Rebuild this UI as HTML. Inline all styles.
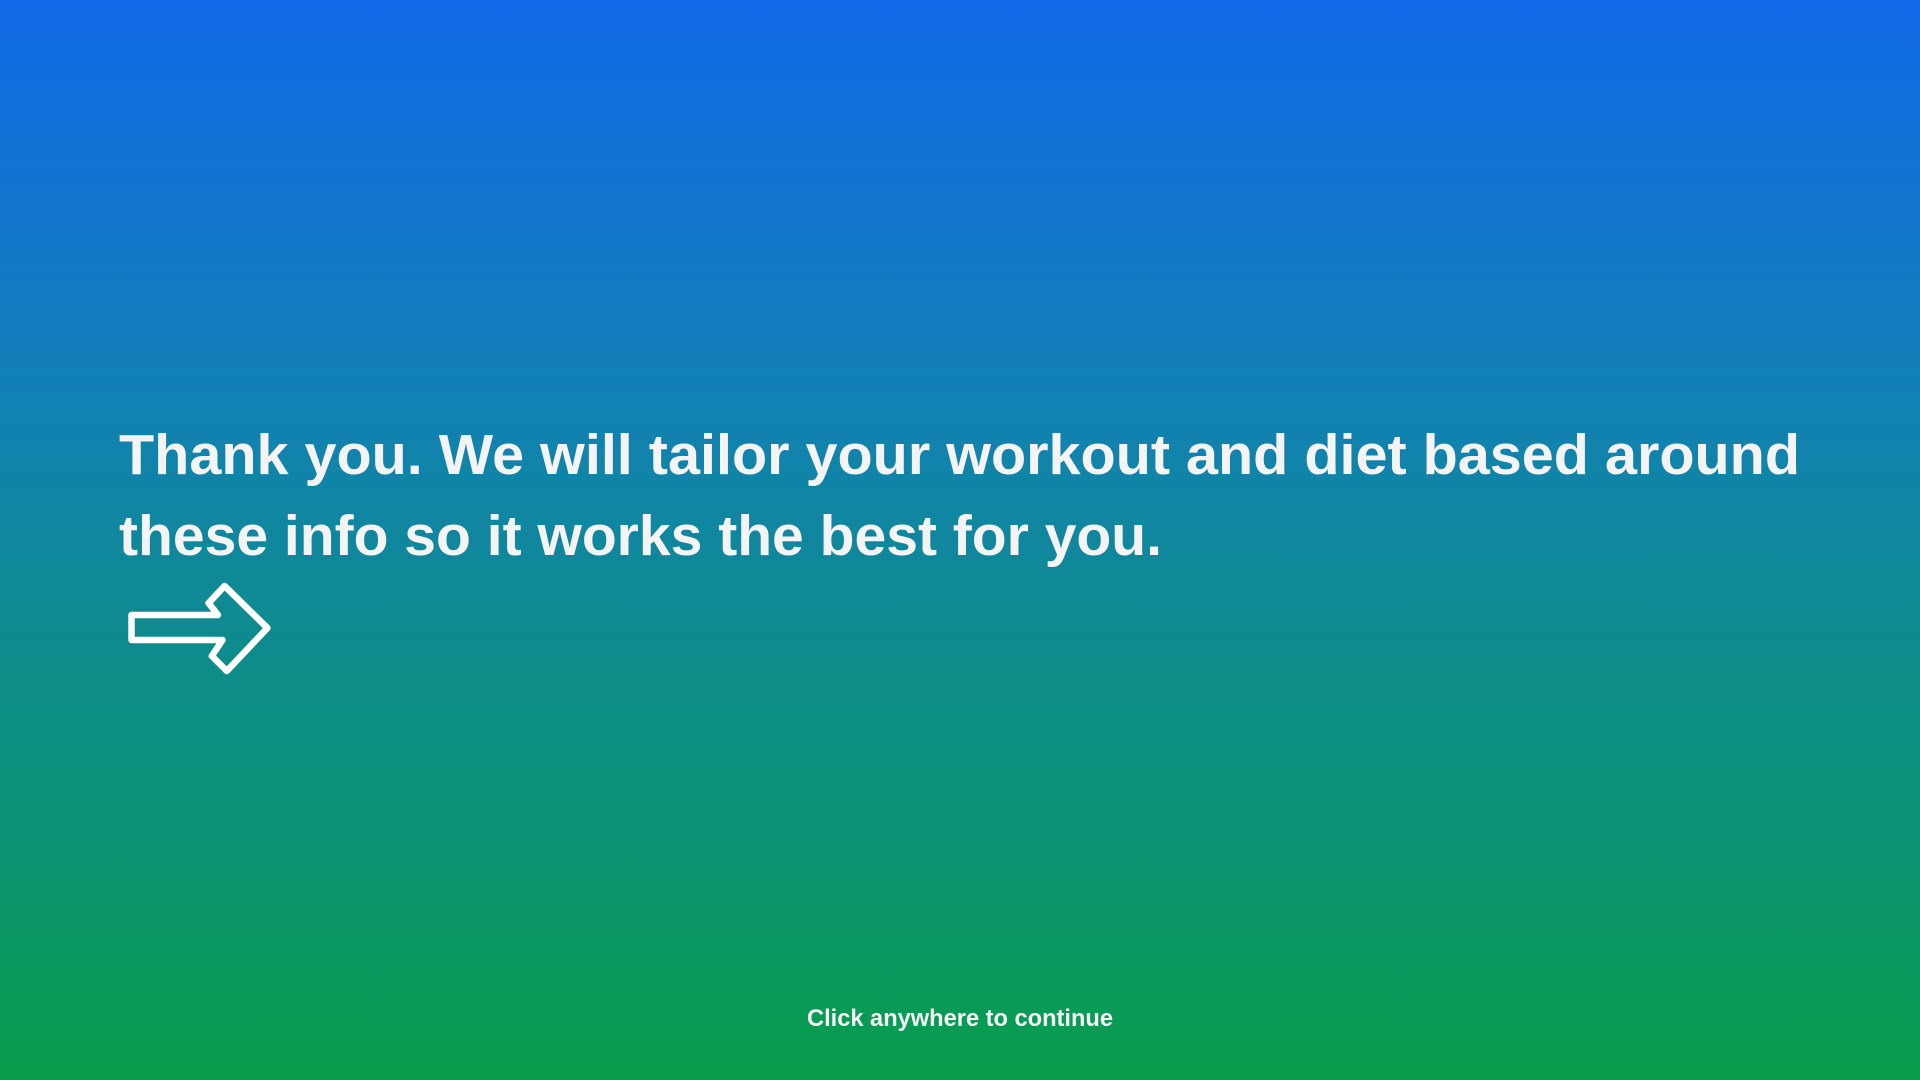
<!DOCTYPE html>
<html><head><meta charset="utf-8"><style>
html,body{margin:0;padding:0;width:1920px;height:1080px;overflow:hidden;}
body{background:linear-gradient(to bottom,#116ae8 0%,#1280b8 35%,#0e8b8c 60%,#0a9470 80%,#089d4a 100%);}
svg{position:absolute;left:0;top:0;}
text{font-family:"Liberation Sans",sans-serif;fill:#f4f4f4;font-weight:bold;}
</style></head><body>
<svg width="1920" height="1080" viewBox="0 0 1920 1080">
<text x="119" y="474" font-size="57" textLength="1681" lengthAdjust="spacingAndGlyphs">Thank you. We will tailor your workout and diet based around</text>
<text x="119" y="555" font-size="57" textLength="1043" lengthAdjust="spacingAndGlyphs">these info so it works the best for you.</text>
<path d="M131.5 615 H218 L208.6 603 L224.6 586 L267.4 628 L226.8 671 L211.8 656 L222.5 640 H131.5 Z" fill="none" stroke="#fff" stroke-width="6.5" stroke-linejoin="round"/>
<text x="807" y="1026" font-size="24" textLength="306" lengthAdjust="spacingAndGlyphs">Click anywhere to continue</text>
</svg>
</body></html>
